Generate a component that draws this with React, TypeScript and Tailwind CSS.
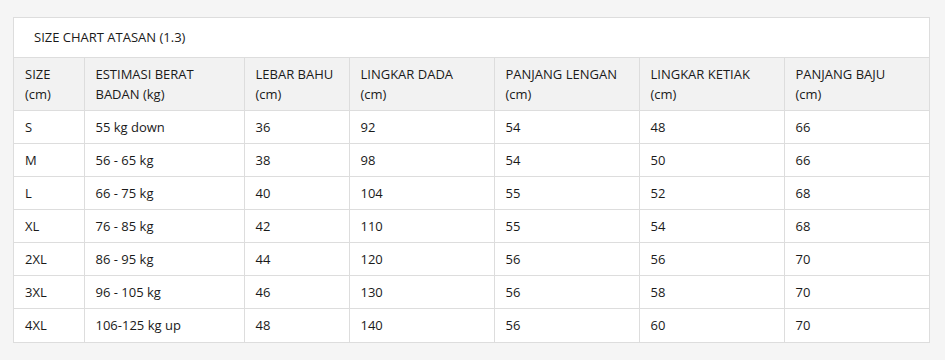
const headers: [string, string][] = [
  ['SIZE', '(cm)'],
  ['ESTIMASI BERAT', 'BADAN (kg)'],
  ['LEBAR BAHU', '(cm)'],
  ['LINGKAR DADA', '(cm)'],
  ['PANJANG LENGAN', '(cm)'],
  ['LINGKAR KETIAK', '(cm)'],
  ['PANJANG BAJU', '(cm)'],
];

const rows: string[][] = [
  ['S', '55 kg down', '36', '92', '54', '48', '66'],
  ['M', '56 - 65 kg', '38', '98', '54', '50', '66'],
  ['L', '66 - 75 kg', '40', '104', '55', '52', '68'],
  ['XL', '76 - 85 kg', '42', '110', '55', '54', '68'],
  ['2XL', '86 - 95 kg', '44', '120', '56', '56', '70'],
  ['3XL', '96 - 105 kg', '46', '130', '56', '58', '70'],
  ['4XL', '106-125 kg up', '48', '140', '56', '60', '70'],
];

export default function App() {
  return (
    <div
      className="w-[945px] h-[360px] bg-[#f5f5f5] pl-[13px] pt-[17px] text-[13px] text-[#1a1a1a]"
      style={{ fontFamily: '"Open Sans", "Noto Sans", sans-serif' }}
    >
      <div className="w-[917px] border border-[#dddddd] bg-white">
        {/* Title */}
        <div className="h-[40px] px-5 flex items-center border-b border-[#dddddd]">
          SIZE CHART ATASAN (1.3)
        </div>

        <table className="w-full table-fixed border-collapse">
          <colgroup>
            <col className="w-[70px]" />
            <col className="w-[160px]" />
            <col className="w-[105px]" />
            <col className="w-[145px]" />
            <col className="w-[145px]" />
            <col className="w-[145px]" />
            <col className="w-[145px]" />
          </colgroup>
          <thead>
            <tr className="bg-[#f2f2f2]">
              {headers.map(([a, b], i) => (
                <th
                  key={a}
                  className={`h-[52px] px-[11px] py-[6px] text-left font-normal leading-5 align-middle ${
                    i === 0 ? '' : 'border-l border-[#dddddd]'
                  }`}
                >
                  {a}
                  <br />
                  {b}
                </th>
              ))}
            </tr>
          </thead>
          <tbody>
            {rows.map((row) => (
              <tr key={row[0]} className="border-t border-[#dddddd]">
                {row.map((cell, i) => (
                  <td
                    key={i}
                    className={`h-[33px] px-[11px] py-[6px] leading-5 ${
                      i === 0 ? '' : 'border-l border-[#dddddd]'
                    }`}
                  >
                    {cell}
                  </td>
                ))}
              </tr>
            ))}
          </tbody>
        </table>
      </div>
    </div>
  );
}
